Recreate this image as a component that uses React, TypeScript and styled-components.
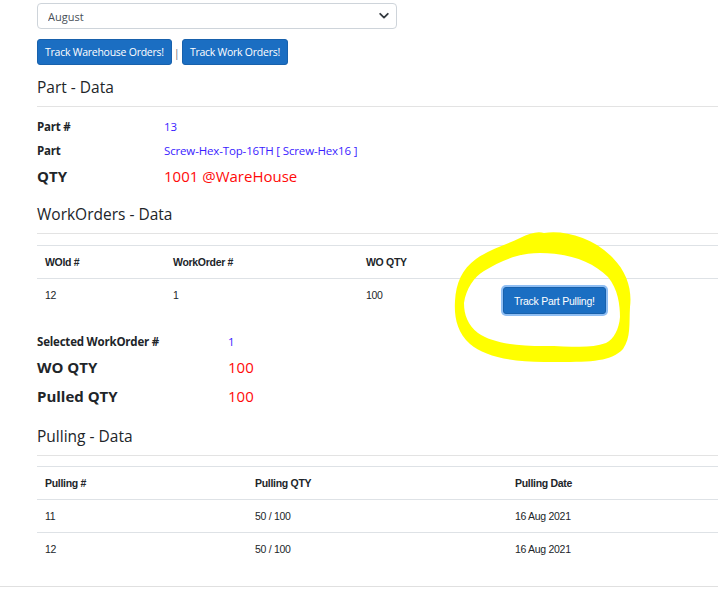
import React from "react"
import styled, { createGlobalStyle } from "styled-components"

const GlobalStyle = createGlobalStyle`
  html, body {
    margin: 0;
    padding: 0;
    background: #ffffff;
    overflow: hidden;
  }
  body {
    font-family: "Open Sans", "Noto Sans", sans-serif;
    color: #212529;
  }
`

const blue = "#1b6ec2"

interface WorkOrder {
  id: number
  number: number
  qty: number
}

interface Pulling {
  id: number
  qty: string
  date: string
}

const workOrders: WorkOrder[] = [{ id: 12, number: 1, qty: 100 }]

const pullings: Pulling[] = [
  { id: 11, qty: "50 / 100", date: "16 Aug 2021" },
  { id: 12, qty: "50 / 100", date: "16 Aug 2021" },
]

const Page = styled.div`
  position: relative;
  width: 718px;
  height: 591px;
  overflow: hidden;
`

const Content = styled.main`
  display: flex;
  flex-direction: column;
  width: 760px;
  padding: 3px 0 0 37px;
  box-sizing: border-box;
`

const SelectWrap = styled.div`
  position: relative;
  width: 360px;
  height: 26px;
`

const Select = styled.select`
  appearance: none;
  width: 100%;
  height: 100%;
  border: 1px solid #ced4da;
  border-radius: 4px;
  background: #fff;
  padding: 0 10px;
  font-family: inherit;
  font-size: 11px;
  color: #495057;
`

const Chevron = styled.svg`
  position: absolute;
  right: 8px;
  top: 9px;
  pointer-events: none;
`

const ButtonRow = styled.div`
  display: flex;
  align-items: center;
  gap: 2px;
  margin-top: 10px;
`

const Separator = styled.span`
  font-size: 11px;
  color: #6c757d;
`

const Button = styled.button<{ $focused?: boolean }>`
  height: ${p => (p.$focused ? "27px" : "26px")};
  padding: ${p => (p.$focused ? "0 10px" : "0 7px")};
  border: 1px solid #1861ac;
  border-radius: 3px;
  background: ${blue};
  color: #fff;
  font-family: inherit;
  font-size: 10.5px;
  letter-spacing: -0.25px;
  box-shadow: ${p => (p.$focused ? "0 0 0 2px #8fbef3" : "none")};
`

const Heading = styled.h3<{ $top: number }>`
  margin: ${p => p.$top}px 0 0 0;
  height: 24px;
  line-height: 24px;
  font-size: 15.5px;
  font-weight: 400;
`

const Rule = styled.hr`
  margin: 7px 0 0 0;
  border: 0;
  border-top: 1px solid #e3e3e3;
  height: 0;
`

const InfoList = styled.div<{ $top: number }>`
  display: flex;
  flex-direction: column;
  margin-top: ${p => p.$top}px;
`

const InfoRow = styled.div<{ $height: number; $labelWidth: number }>`
  display: grid;
  grid-template-columns: ${p => p.$labelWidth}px 1fr;
  align-items: center;
  height: ${p => p.$height}px;
`

const Label = styled.span<{ $big?: boolean }>`
  font-weight: 700;
  font-size: ${p => (p.$big ? "15px" : "11.5px")};
  letter-spacing: ${p => (p.$big ? "0" : "-0.2px")};
  line-height: ${p => (p.$big ? "18px" : "16px")};
  margin-top: ${p => (p.$big ? "-2px" : "0")};
`

const Value = styled.span<{ $kind: "link" | "qty" | "qtyBig" }>`
  color: ${p => (p.$kind === "link" ? "#3a1cff" : "#ff0a0a")};
  font-size: ${p => (p.$kind === "link" ? "11.5px" : "15px")};
  letter-spacing: ${p => (p.$kind === "link" ? "-0.15px" : "0")};
  line-height: ${p => (p.$kind === "link" ? "16px" : "18px")};
  margin-top: ${p => (p.$kind === "link" ? "0" : "-2px")};
`

const Table = styled.table<{ $top: number }>`
  margin-top: ${p => p.$top}px;
  width: 723px;
  border-collapse: collapse;
  table-layout: fixed;
  font-family: "Liberation Sans", Arial, sans-serif;
  font-size: 10.5px;
  letter-spacing: -0.3px;
  color: #212529;
`

const Th = styled.th`
  text-align: left;
  font-weight: 700;
  height: 32px;
  padding: 0 8px;
  border-top: 1px solid #dee2e6;
  border-bottom: 1px solid #dee2e6;
  vertical-align: middle;
`

const Td = styled.td`
  padding: 8px 8px 0 8px;
  vertical-align: top;
  line-height: 17px;
`

const PullTd = styled.td<{ $bordered?: boolean }>`
  height: 32px;
  padding: 0 8px;
  vertical-align: middle;
  border-bottom: ${p => (p.$bordered ? "1px solid #dee2e6" : "0")};
`

const ActionCell = styled.td`
  padding: 8px;
  vertical-align: top;
`

const Footer = styled.div`
  position: absolute;
  left: 0;
  right: 0;
  top: 586px;
  border-top: 1px solid #e0e0e0;
`

const Scribble = styled.svg`
  position: absolute;
  left: 440px;
  top: 225px;
  pointer-events: none;
`

const outer =
  "M104 8 C124 5 152 12 172 32 C188 48 192 66 190 82 C189 100 191 112 183 124 C170 138 146 137 104 137 C70 137 44 131 30 119 C17 107 14 92 15 76 C16 58 22 44 36 34 C50 24 66 20 80 13 C90 8 98 6 104 8 Z"
const inner =
  "M100 28 C128 28 152 36 168 52 C178 64 180 80 180 92 C179 104 174 114 166 118 C150 124 132 121 104 121 C76 121 52 118 38 108 C28 100 24 90 24 78 C26 64 34 52 44 46 C60 36 78 28 100 28 Z"

export default function App() {
  return (
    <Page>
      <GlobalStyle />
      <Content>
        <SelectWrap>
          <Select defaultValue="August">
            <option>August</option>
          </Select>
          <Chevron width="10" height="8" viewBox="0 0 10 8">
            <path d="M1.2 1.8 L5 5.6 L8.8 1.8" fill="none" stroke="#343a40" strokeWidth="1.8" strokeLinecap="round" strokeLinejoin="round" />
          </Chevron>
        </SelectWrap>

        <ButtonRow>
          <Button>Track Warehouse Orders!</Button>
          <Separator>|</Separator>
          <Button>Track Work Orders!</Button>
        </ButtonRow>

        <Heading $top={10}>Part - Data</Heading>
        <Rule />
        <InfoList $top={8}>
          <InfoRow $height={24} $labelWidth={127}>
            <Label>Part #</Label>
            <Value $kind="link">13</Value>
          </InfoRow>
          <InfoRow $height={24} $labelWidth={127}>
            <Label>Part</Label>
            <Value $kind="link">Screw-Hex-Top-16TH [ Screw-Hex16 ]</Value>
          </InfoRow>
          <InfoRow $height={28} $labelWidth={127}>
            <Label $big>QTY</Label>
            <Value $kind="qtyBig">1001 @WareHouse</Value>
          </InfoRow>
        </InfoList>

        <Heading $top={11}>WorkOrders - Data</Heading>
        <Rule />
        <Table $top={11}>
          <colgroup>
            <col style={{ width: 128 }} />
            <col style={{ width: 193 }} />
            <col style={{ width: 137 }} />
            <col />
          </colgroup>
          <thead>
            <tr>
              <Th>WOld #</Th>
              <Th>WorkOrder #</Th>
              <Th>WO QTY</Th>
              <Th />
            </tr>
          </thead>
          <tbody>
            {workOrders.map(wo => (
              <tr key={wo.id}>
                <Td>{wo.id}</Td>
                <Td>{wo.number}</Td>
                <Td>{wo.qty}</Td>
                <ActionCell>
                  <Button $focused>Track Part Pulling!</Button>
                </ActionCell>
              </tr>
            ))}
          </tbody>
        </Table>

        <InfoList $top={8}>
          <InfoRow $height={24} $labelWidth={191}>
            <Label>Selected WorkOrder #</Label>
            <Value $kind="link">1</Value>
          </InfoRow>
          <InfoRow $height={27} $labelWidth={191}>
            <Label $big>WO QTY</Label>
            <Value $kind="qty">100</Value>
          </InfoRow>
          <InfoRow $height={32} $labelWidth={191}>
            <Label $big>Pulled QTY</Label>
            <Value $kind="qty">100</Value>
          </InfoRow>
        </InfoList>

        <Heading $top={11}>Pulling - Data</Heading>
        <Rule />
        <Table $top={10}>
          <colgroup>
            <col style={{ width: 210 }} />
            <col style={{ width: 260 }} />
            <col />
          </colgroup>
          <thead>
            <tr>
              <Th>Pulling #</Th>
              <Th>Pulling QTY</Th>
              <Th>Pulling Date</Th>
            </tr>
          </thead>
          <tbody>
            {pullings.map((p, i) => (
              <tr key={p.id}>
                <PullTd $bordered={i < pullings.length - 1}>{p.id}</PullTd>
                <PullTd $bordered={i < pullings.length - 1}>{p.qty}</PullTd>
                <PullTd $bordered={i < pullings.length - 1}>{p.date}</PullTd>
              </tr>
            ))}
          </tbody>
        </Table>
      </Content>
      <Footer />
      <Scribble width="200" height="145" viewBox="0 0 200 145">
        <path d={outer + " " + inner} fill="#ffff00" fillRule="evenodd" />
      </Scribble>
    </Page>
  )
}
